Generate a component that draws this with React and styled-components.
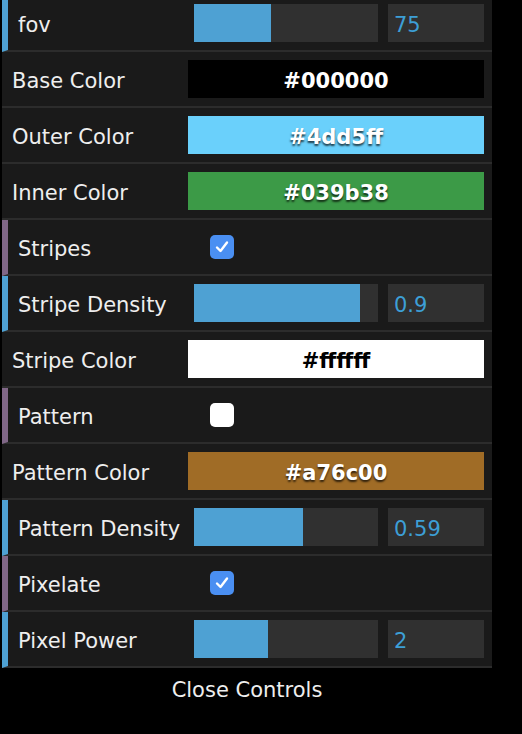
import React from "react";
import styled, { createGlobalStyle } from "styled-components";

const GlobalStyle = createGlobalStyle`
  html, body {
    margin: 0;
    padding: 0;
    background: #000;
    overflow: hidden;
  }
  body {
    font-family: "DejaVu Sans", "Noto Sans", sans-serif;
  }
`;

const Panel = styled.div`
  width: 490px;
  margin: -4px 0 0 2px;
  background: #1a1a1a;
`;

const Row = styled.div`
  display: flex;
  align-items: center;
  height: 54px;
  border-bottom: 2px solid #2c2c2c;
  border-left: ${({ $accent }) => ($accent ? `6px solid ${$accent}` : "none")};
  padding: 0 8px 0 10px;
  background: #1a1a1a;
`;

const Label = styled.div`
  width: 176px;
  flex-shrink: 0;
  padding-top: 3px;
  color: #eee;
  font-size: 21px;
  white-space: nowrap;
`;

const Control = styled.div`
  flex: 1;
  display: flex;
  align-items: center;
  gap: 10px;
  height: 38px;
`;

const SliderTrack = styled.div`
  flex: 1;
  height: 38px;
  background: #303030;
`;

const SliderFill = styled.div`
  height: 100%;
  background: #4ea1d3;
`;

const NumberBox = styled.div`
  width: 96px;
  height: 38px;
  box-sizing: border-box;
  padding: 3px 0 0 6px;
  display: flex;
  align-items: center;
  background: #303030;
  color: #3d9fd6;
  font-size: 21px;
`;

const Swatch = styled.div`
  flex: 1;
  height: 38px;
  box-sizing: border-box;
  padding-top: 3px;
  display: flex;
  align-items: center;
  justify-content: center;
  background: ${({ $color }) => $color};
  color: ${({ $dark }) => ($dark ? "#000" : "#fff")};
  font-size: 21px;
  font-weight: bold;
  text-shadow: ${({ $dark }) =>
    $dark ? "none" : "rgba(0, 0, 0, 0.7) 0 2px 2px"};
`;

const Check = styled.div`
  width: 24px;
  height: 24px;
  margin-left: 16px;
  border-radius: 5px;
  background: ${({ $on }) => ($on ? "#4a8ff2" : "#fff")};
  display: flex;
  align-items: center;
  justify-content: center;
`;

const CloseButton = styled.div`
  width: 490px;
  margin-left: 2px;
  height: 40px;
  box-sizing: border-box;
  padding-top: 3px;
  display: flex;
  align-items: center;
  justify-content: center;
  background: #000;
  color: #eee;
  font-size: 21px;
`;

const NUM = "#4ea1d3";
const BOOL = "#806787";

// shown is the colour as it appears on screen, value is the hex text
const controls = [
  { type: "number", label: "fov", value: 75, min: 0, max: 180 },
  { type: "color", label: "Base Color", value: "#000000", shown: "#000" },
  { type: "color", label: "Outer Color", value: "#4dd5ff", shown: "#6ad0fb" },
  { type: "color", label: "Inner Color", value: "#039b38", shown: "#3c9a47" },
  { type: "bool", label: "Stripes", value: true },
  { type: "number", label: "Stripe Density", value: 0.9, min: 0, max: 1 },
  { type: "color", label: "Stripe Color", value: "#ffffff", shown: "#fff", dark: true },
  { type: "bool", label: "Pattern", value: false },
  { type: "color", label: "Pattern Color", value: "#a76c00", shown: "#a06c26" },
  { type: "number", label: "Pattern Density", value: 0.59, min: 0, max: 1 },
  { type: "bool", label: "Pixelate", value: true },
  { type: "number", label: "Pixel Power", value: 2, min: 0, max: 5 },
];

function CheckMark() {
  return (
    <svg width="16" height="16" viewBox="0 0 16 16">
      <path
        d="M3 8.5 L6.5 12 L13 3.5"
        fill="none"
        stroke="#fff"
        strokeWidth="2.4"
        strokeLinecap="round"
        strokeLinejoin="round"
      />
    </svg>
  );
}

function ControlRow({ item }) {
  if (item.type === "number") {
    const pct = ((item.value - item.min) / (item.max - item.min)) * 100;
    return (
      <Row $accent={NUM}>
        <Label>{item.label}</Label>
        <Control>
          <SliderTrack>
            <SliderFill style={{ width: `${pct}%` }} />
          </SliderTrack>
          <NumberBox>{item.value}</NumberBox>
        </Control>
      </Row>
    );
  }
  if (item.type === "bool") {
    return (
      <Row $accent={BOOL}>
        <Label>{item.label}</Label>
        <Control>
          <Check $on={item.value}>{item.value && <CheckMark />}</Check>
        </Control>
      </Row>
    );
  }
  return (
    <Row>
      <Label>{item.label}</Label>
      <Control>
        <Swatch $color={item.shown} $dark={item.dark}>
          {item.value}
        </Swatch>
      </Control>
    </Row>
  );
}

export default function App() {
  return (
    <>
      <GlobalStyle />
      <Panel>
        {controls.map((item) => (
          <ControlRow key={item.label} item={item} />
        ))}
      </Panel>
      <CloseButton>Close Controls</CloseButton>
    </>
  );
}
